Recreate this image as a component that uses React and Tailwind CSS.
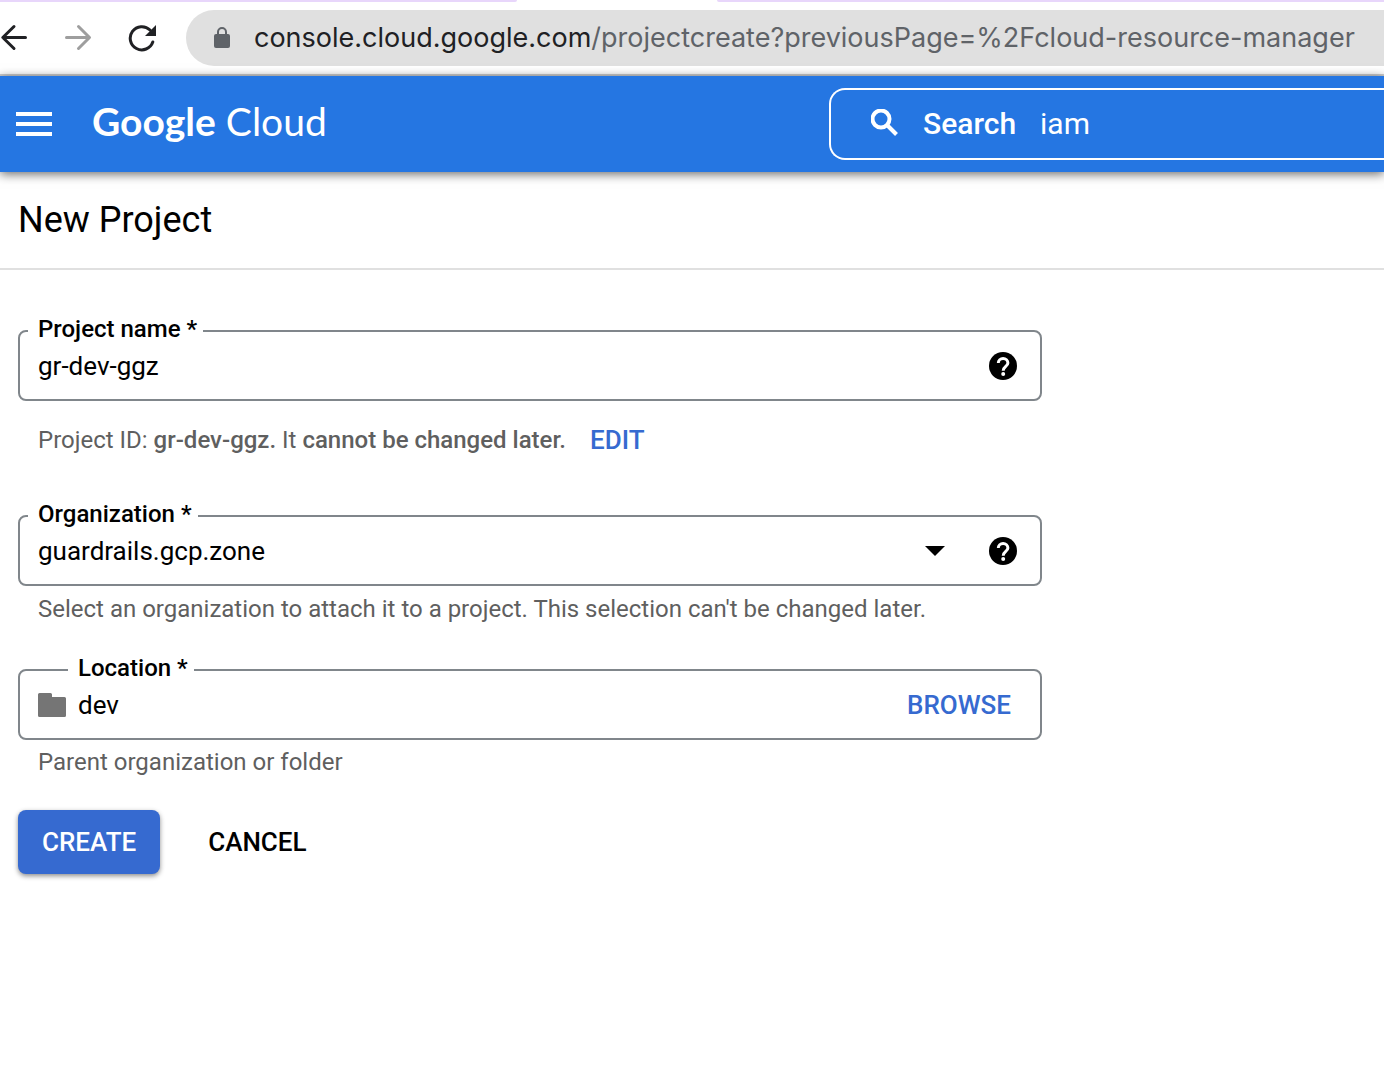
function BackIcon() {
  return (
    <svg width="28" height="28" viewBox="0 0 28 28" fill="none" stroke="currentColor" strokeWidth="3" strokeLinecap="round" strokeLinejoin="round">
      <path d="M25.5 13.500H3M14 2.500L2.800 13.500L14 24.500" />
    </svg>
  );
}

function ForwardIcon() {
  return (
    <svg width="28" height="28" viewBox="0 0 28 28" fill="none" stroke="currentColor" strokeWidth="3" strokeLinecap="round" strokeLinejoin="round">
      <path d="M2.500 13.500H25M14.500 2.500L25.500 13.500L14.500 24.500" />
    </svg>
  );
}

function ReloadIcon() {
  return (
    <svg width="28" height="28" viewBox="0 0 28 28">
      <path d="M24.800 18A11.600 11.600 0 1 1 22 6" fill="none" stroke="currentColor" strokeWidth="3" strokeLinecap="round" />
      <path d="M28 1V12H17Z" fill="currentColor" />
    </svg>
  );
}

function LockIcon() {
  return (
    <svg width="16" height="22" viewBox="0 0 16 22">
      <path d="M4 9V5a4 4 0 0 1 8 0V9" fill="none" stroke="#5f6368" strokeWidth="2" />
      <rect y="7" width="16" height="14" rx="2" fill="#5f6368" />
    </svg>
  );
}

function SearchIcon() {
  return (
    <svg width="28" height="28" viewBox="0 0 28 28" fill="none" stroke="white" strokeWidth="4">
      <circle cx="10" cy="10" r="8.500" />
      <path d="M16 16L25.500 25.500" />
    </svg>
  );
}

function HelpButton({ label }) {
  return (
    <button type="button" aria-label={label} className="shrink-0">
      <svg width="28" height="28" viewBox="0 0 28 28">
        <circle cx="14" cy="14" r="14" />
        <path d="M9.300 11A4.800 4.600 0 0 1 18.900 11C18.900 14.300 14.200 14.600 14.200 18.700" fill="none" stroke="white" strokeWidth="3" />
        <circle cx="14.200" cy="22" r="2" fill="white" />
      </svg>
    </button>
  );
}

function FolderIcon() {
  return (
    <svg width="28" height="24" viewBox="0 0 28 24" className="shrink-0">
      <path d="M1.500 0H12.500Q14 0 14 1.500V4H26.500Q28 4 28 5.500V22.500Q28 24 26.500 24H1.500Q0 24 0 22.500V1.500Q0 0 1.500 0Z" fill="#757575" />
    </svg>
  );
}

function Field({ id, label, legendMargin = "ml-2", children }) {
  return (
    <fieldset className="min-w-0 rounded-lg border-2 border-[#80868b]">
      <legend className={`${legendMargin} pr-[6px] pb-1 pl-[10px] text-[24px] leading-6 font-medium`}>
        <label htmlFor={id}>{label}</label>
      </legend>
      <div className="flex h-[42px] items-center pr-[23px] pl-[18px]">{children}</div>
      <div className="h-3" />
    </fieldset>
  );
}

export default function App() {
  return (
    <div className="min-h-screen overflow-hidden bg-white font-['Roboto',sans-serif] text-black">
      <div className="flex h-[2px] bg-white">
        <div className="w-[517px] rounded-br-lg bg-[#e8d6fb]" />
        <div className="w-[200px]" />
        <div className="flex-1 rounded-bl-lg bg-[#e8d6fb]" />
      </div>

      <div className="flex h-[74px] items-center border-b-2 border-[#cfcfcf] text-[#202124]">
        <button type="button" aria-label="Back"><BackIcon /></button>
        <button type="button" aria-label="Forward" className="ml-9 text-[#9e9e9e]"><ForwardIcon /></button>
        <button type="button" aria-label="Reload" className="ml-9"><ReloadIcon /></button>
        <div className="ml-[30px] flex h-14 min-w-0 flex-1 items-center overflow-hidden rounded-l-full bg-[#e0e0e0] pl-7">
          <LockIcon />
          <a href="#url" className="ml-6 font-['Inter',sans-serif] text-[27px] leading-9 whitespace-nowrap">
            console.cloud.google.com<span className="text-[#5f6368]">/projectcreate?previousPage=%2Fcloud-resource-manager</span>
          </a>
        </div>
      </div>

      <header className="relative flex h-24 items-center bg-[#2576e2] text-white shadow-[0_2px_10px_rgba(0,0,0,0.6)]">
        <button type="button" aria-label="Main menu" className="ml-4 flex w-9 flex-col gap-[6px]">
          <span className="h-1 w-full bg-white" />
          <span className="h-1 w-full bg-white" />
          <span className="h-1 w-full bg-white" />
        </button>
        <a href="#home" className="ml-10 pb-[6px] font-['Lato',sans-serif] text-[39px] leading-12 whitespace-nowrap">
          <span className="font-bold">Google</span> <span>Cloud</span>
        </a>
        <label className="ml-auto flex h-[72px] w-[555px] items-center rounded-l-2xl border-2 border-r-0 border-white pb-[2px] pl-10">
          <SearchIcon />
          <span className="ml-6 text-[30px] font-medium">Search</span>
          <input type="text" defaultValue="iam" className="ml-6 min-w-0 flex-1 text-[30px] outline-none" />
        </label>
      </header>

      <div className="border-b-2 border-[#e0e0e0] px-[18px] pt-6 pb-6">
        <h1 className="text-[36px] leading-12">New Project</h1>
      </div>

      <form className="flex max-w-[1060px] flex-col px-[18px] pt-[47px]">
        <Field id="name" label="Project name *">
          <input id="name" type="text" defaultValue="gr-dev-ggz" className="min-w-0 flex-1 text-[26px] outline-none" />
          <HelpButton label="About the project name" />
        </Field>
        <div className="mt-[25px] flex items-center pl-5 text-[24px] leading-7 text-[#5f5f5f]">
          <p>
            Project ID: <b className="font-medium">gr-dev-ggz.</b> It <b className="font-medium">cannot be changed later.</b>
          </p>
          <button type="button" className="ml-6 text-[26px] leading-7 font-medium text-[#366ad0]">EDIT</button>
        </div>

        <div className="mt-12">
          <Field id="org" label="Organization *">
            <select id="org" className="min-w-0 flex-1 appearance-none text-[26px] outline-none">
              <option>guardrails.gcp.zone</option>
            </select>
            <svg width="20" height="10" viewBox="0 0 20 10" className="mr-11 shrink-0"><path d="M0 0H20L10 10Z" /></svg>
            <HelpButton label="About the organization" />
          </Field>
        </div>
        <p className="mt-[9px] pl-5 text-[24px] leading-7 text-[#5f5f5f]">
          Select an organization to attach it to a project. This selection can't be changed later.
        </p>

        <div className="mt-[33px]">
          <Field id="location" label="Location *" legendMargin="ml-12">
            <FolderIcon />
            <input id="location" type="text" defaultValue="dev" className="ml-3 min-w-0 flex-1 text-[26px] outline-none" />
            <button type="button" className="mr-[6px] text-[26px] font-medium text-[#366ad0]">BROWSE</button>
          </Field>
        </div>
        <p className="mt-2 pl-5 text-[24px] leading-7 text-[#5f5f5f]">Parent organization or folder</p>

        <div className="mt-[34px] flex items-center">
          <button type="button" className="h-16 rounded-lg bg-[#366ad0] px-6 text-[26px] font-medium text-white shadow-[0_2px_5px_rgba(0,0,0,0.45)]">CREATE</button>
          <button type="button" className="ml-6 h-16 px-6 text-[26px] font-medium">CANCEL</button>
        </div>
      </form>
    </div>
  );
}
